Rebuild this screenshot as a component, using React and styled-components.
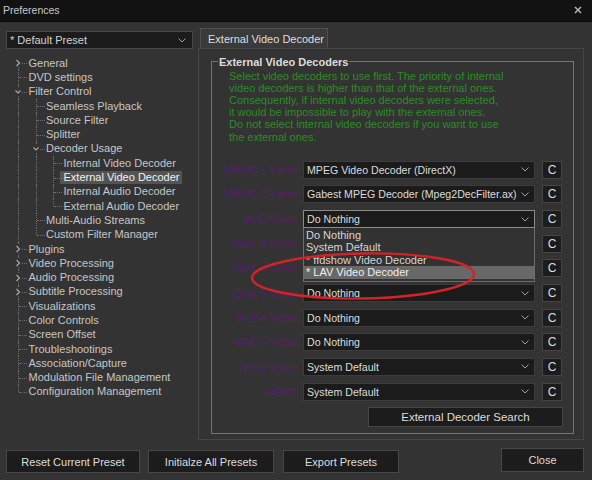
import React from 'react';
import styled, { createGlobalStyle } from 'styled-components';

const GlobalStyle = createGlobalStyle`
  html, body { margin: 0; padding: 0; background: #333333; }
  body { font-family: "Liberation Sans", Arial, sans-serif; font-size: 11px; color: #d0d0d0; }
  * { box-sizing: border-box; }
`;

const Window = styled.div`
  width: 592px;
  height: 480px;
  display: flex;
  flex-direction: column;
  background: #333333;
  position: relative;
  overflow: hidden;
`;

const TitleBar = styled.div`
  height: 22px;
  flex: none;
  background: #121212;
  border-bottom: 1px solid #080808;
  display: flex;
  align-items: center;
  justify-content: space-between;
  padding: 0 10px 1px 3px;
  font-size: 10.5px;
  color: #c8c8c8;
`;

const CloseGlyph = styled.svg`
  width: 8px;
  height: 8px;
  display: block;
`;

const Main = styled.div`
  flex: 1;
  display: flex;
  min-height: 0;
`;

const LeftPane = styled.div`
  width: 198px;
  flex: none;
  padding: 9px 0 0 6px;
`;

const PresetSelect = styled.div`
  width: 187px;
  height: 18px;
  background: #1b1b1b;
  border: 1px solid #4a4a4a;
  display: flex;
  align-items: center;
  padding: 0 6px 0 3px;
  color: #d2d2d2;
  font-size: 11px;
`;

const Chevron = styled.svg`
  width: 8px;
  height: 5px;
  margin-left: auto;
  flex: none;
  display: block;
`;

const Tree = styled.div`
  margin: 7px 0 0 -2px;
  padding-left: 6px;
`;

const TreeRow = styled.div`
  display: flex;
  align-items: center;
  height: 14.3px;
`;

const Cell = styled.span`
  position: relative;
  flex: none;
  width: 17.5px;
  height: 100%;
  &::before {
    content: '';
    display: ${p => (p.$top || p.$bottom ? 'block' : 'none')};
    position: absolute;
    left: 8px;
    top: ${p => (p.$top ? '0' : '50%')};
    bottom: ${p => (p.$bottom ? '0' : '50%')};
    border-left: 1px dotted #6e6e6e;
  }
  &::after {
    content: '';
    display: ${p => (p.$stub ? 'block' : 'none')};
    position: absolute;
    left: 9px;
    top: 50%;
    width: 8px;
    border-top: 1px dotted #6e6e6e;
  }
`;

const Toggle = styled.svg`
  position: absolute;
  left: 4px;
  top: 50%;
  width: 8px;
  height: 8px;
  margin-top: -4px;
  z-index: 1;
  display: block;
`;

const ItemLabel = styled.span`
  white-space: nowrap;
  line-height: 13px;
  height: 13px;
  padding: 0 3px 0 ${p => (p.$selected ? '3.5px' : '1px')};
  margin-left: ${p => (p.$selected ? '-2.5px' : '0')};
  color: ${p => (p.$selected ? '#f2f2f2' : '#c6c6c6')};
  background: ${p => (p.$selected ? '#545454' : 'transparent')};
`;

const RightPane = styled.div`
  width: 386px;
  flex: none;
  margin-top: 6px;
  display: flex;
  flex-direction: column;
`;

const TabStrip = styled.div`
  display: flex;
  padding-left: 2px;
`;

const Tab = styled.div`
  height: 20px;
  width: 128px;
  background: #3a3a3a;
  border: 1px solid #505050;
  border-bottom: none;
  display: flex;
  align-items: center;
  padding: 0 7px;
  color: #dedede;
  font-size: 11px;
  white-space: nowrap;
`;

const TabPanel = styled.div`
  height: 392px;
  border: 1px solid #474747;
  display: flex;
  flex-direction: column;
  padding: 0 9px 0 12px;
`;

const Group = styled.fieldset`
  flex: 1;
  margin: 6.5px 0 5px 0;
  padding: 0;
  border: 1px solid #747474;
  min-width: 0;
  display: flex;
  flex-direction: column;
`;

const GroupTitle = styled.legend`
  margin-left: 6px;
  padding: 0 1px;
  font-weight: bold;
  font-size: 11px;
  color: #dcdcdc;
`;

const Notes = styled.div`
  padding: 2px 0 0 17px;
  color: #2d8c24;
  font-size: 11px;
  line-height: 12.2px;
`;

const NoteLine = styled.div`
  white-space: nowrap;
`;

const Rows = styled.div`
  margin-top: 18px;
  display: flex;
  flex-direction: column;
  gap: 6.67px;
`;

const Row = styled.div`
  display: grid;
  grid-template-columns: 91px 232px 27px;
  align-items: center;
`;

const RowLabel = styled.div`
  text-align: right;
  color: #571e6c;
  font-size: 11px;
  white-space: nowrap;
  margin-right: 6px;
`;

const SelectBox = styled.div`
  position: relative;
  height: 18px;
  background: #1b1b1b;
  border: 1px solid ${p => (p.$open ? '#8a8a8a' : '#3c3c3c')};
  display: flex;
  align-items: center;
  padding: 0 5px 0 3px;
  color: #dcdcdc;
  font-size: 10.6px;
  white-space: nowrap;
`;

const SelectText = styled.span`
  overflow: hidden;
`;

const Popup = styled.div`
  position: absolute;
  left: -1px;
  right: -1px;
  top: 17px;
  height: 54px;
  background: #323232;
  border: 1px solid #6c6c6c;
  border-top: none;
  padding: 1px 0 0 0;
  z-index: 5;
`;

const PopupItem = styled.div`
  height: 12.4px;
  line-height: 12.4px;
  padding-left: 2px;
  color: ${p => (p.$active ? '#f0f0f0' : '#d6d6d6')};
  background: ${p => (p.$active ? '#686868' : 'transparent')};
  font-size: 11px;
  white-space: nowrap;
`;

const ClearButton = styled.div`
  margin-left: 7px;
  width: 20px;
  height: 18px;
  background: #1c1c1c;
  border: 1px solid #454545;
  display: flex;
  align-items: center;
  justify-content: center;
  color: #dcdcdc;
  font-size: 12px;
`;

const SearchButton = styled.div`
  align-self: flex-end;
  margin: 6.5px 10px 0 0;
  width: 195px;
  height: 20px;
  background: #1c1c1c;
  border: 1px solid #454545;
  display: flex;
  align-items: center;
  justify-content: center;
  color: #dcdcdc;
  font-size: 11.5px;
`;

const Footer = styled.div`
  height: 36px;
  flex: none;
  display: flex;
  align-items: flex-start;
  padding: 6px 8px 0 6px;
`;

const FooterButton = styled.div`
  width: ${p => p.$w}px;
  height: ${p => p.$h || 23}px;
  margin-right: ${p => p.$mr || 0}px;
  margin-top: ${p => p.$mt || 0}px;
  background: #1c1c1c;
  border: 1px solid #474747;
  display: flex;
  align-items: center;
  justify-content: center;
  color: #dcdcdc;
  font-size: 11px;
  white-space: nowrap;
`;

const Spacer = styled.div`
  flex: 1;
`;

const Annotation = styled.svg`
  position: absolute;
  left: 248px;
  top: 250px;
  width: 232px;
  height: 52px;
  pointer-events: none;
  z-index: 10;
`;

const treeData = [
  { label: 'General', collapsed: true },
  { label: 'DVD settings' },
  {
    label: 'Filter Control',
    children: [
      { label: 'Seamless Playback' },
      { label: 'Source Filter' },
      { label: 'Splitter' },
      {
        label: 'Decoder Usage',
        children: [
          { label: 'Internal Video Decoder' },
          { label: 'External Video Decoder', selected: true },
          { label: 'Internal Audio Decoder' },
          { label: 'External Audio Decoder' },
        ],
      },
      { label: 'Multi-Audio Streams' },
      { label: 'Custom Filter Manager' },
    ],
  },
  { label: 'Plugins', collapsed: true },
  { label: 'Video Processing', collapsed: true },
  { label: 'Audio Processing', collapsed: true },
  { label: 'Subtitle Processing', collapsed: true },
  { label: 'Visualizations' },
  { label: 'Color Controls' },
  { label: 'Screen Offset' },
  { label: 'Troubleshootings' },
  { label: 'Association/Capture' },
  { label: 'Modulation File Management' },
  { label: 'Configuration Management' },
];

function flatten(nodes, level = 0, ancestorsLast = [], out = []) {
  nodes.forEach((n, i) => {
    const isLast = i === nodes.length - 1;
    const isFirst = i === 0 && level === 0;
    out.push({ ...n, level, isLast, isFirst, ancestorsLast });
    if (n.children) flatten(n.children, level + 1, [...ancestorsLast, isLast], out);
  });
  return out;
}

const rowsFlat = flatten(treeData);

function ToggleIcon({ open }) {
  return (
    <Toggle viewBox="0 0 8 8">
      <rect x="0" y="0" width="8" height="8" fill="#333333" />
      {open ? (
        <polyline points="1.5,2.5 4,5 6.5,2.5" fill="none" stroke="#a8a8a8" strokeWidth="1.2" />
      ) : (
        <polyline points="2.5,1 5.5,4 2.5,7" fill="none" stroke="#a8a8a8" strokeWidth="1.2" />
      )}
    </Toggle>
  );
}

function TreeItem({ item }) {
  const cells = [];
  for (let i = 0; i < item.level; i++) {
    const cont = !item.ancestorsLast[i];
    cells.push(<Cell key={i} $top={cont} $bottom={cont} />);
  }
  const hasToggle = item.collapsed || item.children;
  cells.push(
    <Cell key="own" $top={!item.isFirst} $bottom={!item.isLast} $stub>
      {hasToggle && <ToggleIcon open={!!item.children} />}
    </Cell>
  );
  return (
    <TreeRow>
      {cells}
      <ItemLabel $selected={item.selected}>{item.label}</ItemLabel>
    </TreeRow>
  );
}

function DownChevron() {
  return (
    <Chevron viewBox="0 0 8 5">
      <polyline points="0.5,0.5 4,4 7.5,0.5" fill="none" stroke="#a0a0a0" strokeWidth="1" />
    </Chevron>
  );
}

const decoderRows = [
  { label: 'MPEG-1 Video', value: 'MPEG Video Decoder (DirectX)' },
  { label: 'MPEG-2 Video', value: 'Gabest MPEG Decoder (Mpeg2DecFilter.ax)' },
  { label: 'AVC Video', value: 'Do Nothing', open: true },
  { label: 'DivX 3 Video', value: '' },
  { label: 'DivX 4 Video', value: '' },
  { label: 'DivX 5 Video', value: 'Do Nothing' },
  { label: 'H.264 Video', value: 'Do Nothing' },
  { label: 'WVC1 Video', value: 'Do Nothing' },
  { label: 'VC-1 Video', value: 'System Default' },
  { label: 'HEVC', value: 'System Default' },
];

const popupItems = ['Do Nothing', 'System Default', '* ffdshow Video Decoder', '* LAV Video Decoder'];

const notes = [
  'Select video decoders to use first. The priority of internal',
  'video decoders is higher than that of the external ones.',
  'Consequently, if internal video decoders were selected,',
  'it would be impossible to play with the external ones.',
  'Do not select internal video decoders if you want to use',
  'the external ones.',
];

export default function App() {
  return (
    <Window>
      <GlobalStyle />
      <TitleBar>
        <span>Preferences</span>
        <CloseGlyph viewBox="0 0 8 8">
          <line x1="1" y1="1" x2="7" y2="7" stroke="#b8b8b8" strokeWidth="1.4" />
          <line x1="7" y1="1" x2="1" y2="7" stroke="#b8b8b8" strokeWidth="1.4" />
        </CloseGlyph>
      </TitleBar>
      <Main>
        <LeftPane>
          <PresetSelect>
            <span>* Default Preset</span>
            <DownChevron />
          </PresetSelect>
          <Tree>
            {rowsFlat.map((r, i) => (
              <TreeItem key={i} item={r} />
            ))}
          </Tree>
        </LeftPane>
        <RightPane>
          <TabStrip>
            <Tab>External Video Decoder</Tab>
          </TabStrip>
          <TabPanel>
            <Group>
              <GroupTitle>External Video Decoders</GroupTitle>
              <Notes>
                {notes.map((n, i) => (
                  <NoteLine key={i}>{n}</NoteLine>
                ))}
              </Notes>
              <Rows>
                {decoderRows.map((r, i) => (
                  <Row key={i}>
                    <RowLabel>{r.label}</RowLabel>
                    <SelectBox $open={r.open}>
                      <SelectText>{r.value}</SelectText>
                      <DownChevron />
                      {r.open && (
                        <Popup>
                          {popupItems.map((p, j) => (
                            <PopupItem key={j} $active={j === 3}>
                              {p}
                            </PopupItem>
                          ))}
                        </Popup>
                      )}
                    </SelectBox>
                    <ClearButton>C</ClearButton>
                  </Row>
                ))}
              </Rows>
              <SearchButton>External Decoder Search</SearchButton>
            </Group>
          </TabPanel>
        </RightPane>
      </Main>
      <Footer>
        <FooterButton $w={134} $mr={8}>Reset Current Preset</FooterButton>
        <FooterButton $w={126} $mr={9}>Initialze All Presets</FooterButton>
        <FooterButton $w={116}>Export Presets</FooterButton>
        <Spacer />
        <FooterButton $w={83} $h={24} $mt={-2}>Close</FooterButton>
      </Footer>
      <Annotation viewBox="0 0 232 52">
        <ellipse cx="115" cy="26" rx="111" ry="22.5" fill="none" stroke="#d42328" strokeWidth="2.4" transform="rotate(-1 115 26)" />
      </Annotation>
    </Window>
  );
}
